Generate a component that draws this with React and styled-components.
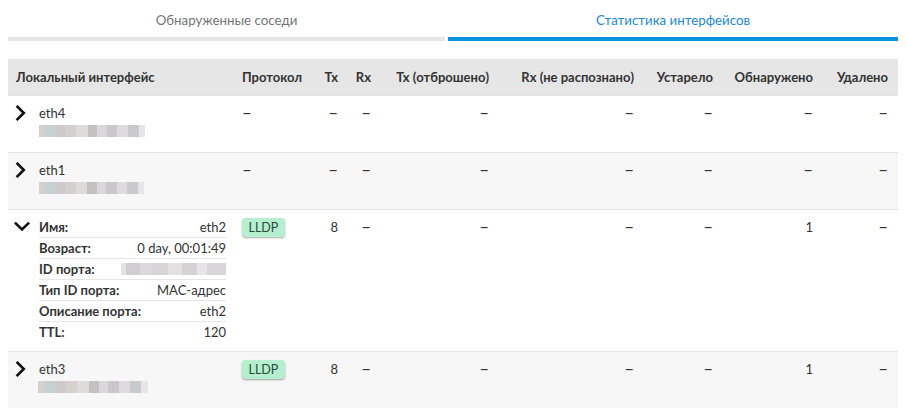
import React from "react";
import styled, { createGlobalStyle } from "styled-components";

const Global = createGlobalStyle`
  body { margin: 8px; background: #fff; font-family: Lato, "Open Sans", sans-serif; color: #333; }
  * { box-sizing: border-box; }
`;

const Tabs = styled.div`
  display: grid;
  grid-template-columns: 437px 1fr;
  column-gap: 3px;
`;

const Tab = styled.div`
  text-align: center;
  font-size: 13.3px;
  line-height: 20px;
  padding: 2px 0 7px;
  color: ${(p) => (p.$active ? "#1a8ad4" : "#757575")};
  border-bottom: 4px solid ${(p) => (p.$active ? "#0894dc" : "#e5e5e5")};
`;

const COLS = "226px 76px 36px 33px 118px 145px 79px 100px 75px";

const Table = styled.div`
  margin-top: 18px;
  font-size: 13px;
`;

const HeadRow = styled.div`
  display: grid;
  grid-template-columns: ${COLS};
  background: #e6e6e6;
  height: 36px;
  align-items: center;
  font-weight: 700;
  color: #333;
`;

const Row = styled.div`
  display: grid;
  grid-template-columns: ${COLS};
  background: ${(p) => (p.$alt ? "#f7f7f7" : "#fff")};
  border-top: 1px solid #e3e3e3;
`;

const Cell = styled.div`
  padding: ${(p) => (p.$head ? "0 8px" : "7px 8px 9px")};
  line-height: 20px;
  text-align: ${(p) => (p.$right ? "right" : "left")};
  white-space: nowrap;
`;

const IfaceCell = styled(Cell)`
  display: flex;
  align-items: flex-start;
`;

const Chevron = styled.svg`
  width: 16px;
  height: 16px;
  margin: 2px 9px 0 -2px;
  flex: none;
`;

const NameBlock = styled.div`
  flex: 1;
`;

const Dash = styled.span`
  font-size: 17px;
  line-height: 20px;
  color: #333;
`;

const Blur = styled.div`
  width: ${(p) => p.$w}px;
  height: 12px;
  margin: 2px 0 6px ${(p) => p.$ml || 0}px;
  background: linear-gradient(
    to right,
    #d6d1cc 0 5%,
    #c7d0d3 5% 15%,
    #cfc9cc 15% 25%,
    #d3d0ce 25% 35%,
    #dcdcdc 35% 46%,
    #c4c2c0 46% 55%,
    #d8d8db 55% 64%,
    #cbc8cc 64% 74%,
    #dddbdd 74% 84%,
    #c8cacb 84% 94%,
    #e6e6e6 94% 100%
  );
`;

const Badge = styled.span`
  display: inline-block;
  background: #b5efd0;
  color: #2a4a3b;
  font-size: 12.5px;
  line-height: 19px;
  padding: 0 6.5px;
  border-radius: 4px;
  box-shadow: 0 1px 2px rgba(0, 0, 0, 0.35);
  margin: 1px 0 0 0;
`;

const Details = styled.div`
  flex: 1;
`;

const DetailRow = styled.div`
  display: flex;
  justify-content: space-between;
  line-height: 20px;
  border-bottom: ${(p) => (p.$last ? "none" : "1px solid #e6e6e6")};
`;

const Label = styled.span`
  font-weight: 700;
  color: #333;
`;

const Value = styled.span`
  color: #333;
  display: flex;
  align-items: center;
`;

const InlineBlur = styled.span`
  display: inline-block;
  width: 105px;
  height: 12px;
  background: linear-gradient(
    to right,
    #e4e2e4 0 5%,
    #d2ccd3 5% 18%,
    #dcd9dc 18% 30%,
    #d7d4d6 30% 45%,
    #e2e1e2 45% 58%,
    #d5d2d4 58% 72%,
    #e6e4e6 72% 82%,
    #d9d6d9 82% 100%
  );
`;

const RightIcon = () => (
  <Chevron viewBox="0 0 16 16">
    <polyline points="3.5,1.8 9.8,8 3.5,14.2" fill="none" stroke="#111" strokeWidth="2.6" strokeLinecap="square" />
  </Chevron>
);

const DownIcon = () => (
  <Chevron viewBox="0 0 16 16">
    <polyline points="1.8,4.5 8,10.5 14.2,4.5" fill="none" stroke="#111" strokeWidth="2.6" strokeLinecap="square" />
  </Chevron>
);

const D = () => <Dash>–</Dash>;

const headers = [
  ["Локальный интерфейс", false],
  ["Протокол", false],
  ["Tx", true],
  ["Rx", true],
  ["Tx (отброшено)", true],
  ["Rx (не распознано)", true],
  ["Устарело", true],
  ["Обнаружено", true],
  ["Удалено", true],
];

const rows = [
  { name: "eth4", blur: 106, ml: 0, proto: null, tx: null, found: null },
  { name: "eth1", blur: 105, ml: 0, proto: null, tx: null, found: null, alt: true },
  { name: "eth2", expanded: true, proto: "LLDP", tx: "8", found: "1" },
  { name: "eth3", blur: 110, ml: -1, proto: "LLDP", tx: "8", found: "1", alt: true },
];

const details = [
  ["Имя:", "eth2"],
  ["Возраст:", "0 day, 00:01:49"],
  ["ID порта:", null],
  ["Тип ID порта:", "MAC-адрес"],
  ["Описание порта:", "eth2"],
  ["TTL:", "120"],
];

export default function App() {
  return (
    <>
      <Global />
      <Tabs>
        <Tab>Обнаруженные соседи</Tab>
        <Tab $active>Статистика интерфейсов</Tab>
      </Tabs>
      <Table>
        <HeadRow>
          {headers.map(([h, r]) => (
            <Cell key={h} $head $right={r}>
              {h}
            </Cell>
          ))}
        </HeadRow>
        {rows.map((r) => (
          <Row key={r.name} $alt={r.alt}>
            <IfaceCell>
              {r.expanded ? <DownIcon /> : <RightIcon />}
              {r.expanded ? (
                <Details>
                  {details.map(([l, v], i) => (
                    <DetailRow key={l} $last={i === details.length - 1}>
                      <Label>{l}</Label>
                      <Value>{v === null ? <InlineBlur /> : v}</Value>
                    </DetailRow>
                  ))}
                </Details>
              ) : (
                <NameBlock>
                  <div>{r.name}</div>
                  <Blur $w={r.blur} $ml={r.ml} />
                </NameBlock>
              )}
            </IfaceCell>
            <Cell>{r.proto ? <Badge>{r.proto}</Badge> : <D />}</Cell>
            <Cell $right>{r.tx || <D />}</Cell>
            <Cell $right><D /></Cell>
            <Cell $right><D /></Cell>
            <Cell $right><D /></Cell>
            <Cell $right><D /></Cell>
            <Cell $right>{r.found || <D />}</Cell>
            <Cell $right><D /></Cell>
          </Row>
        ))}
      </Table>
    </>
  );
}
